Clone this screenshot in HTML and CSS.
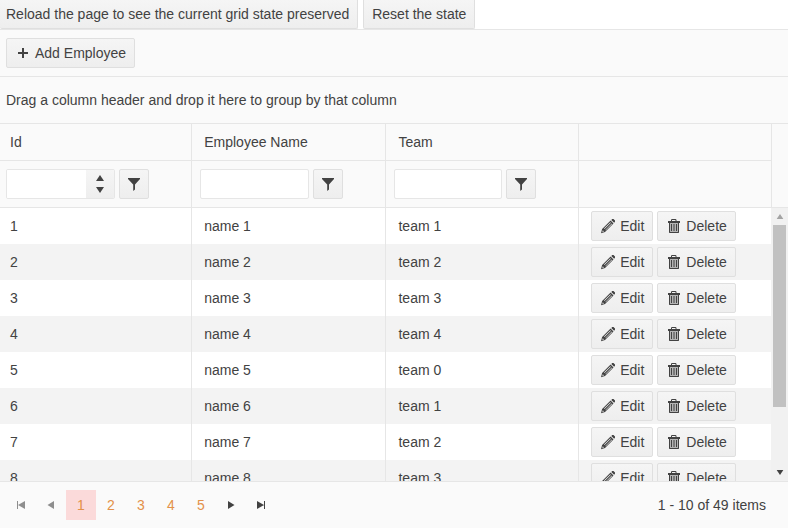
FILE: index.html
```html
<!DOCTYPE html>
<html lang="en">
<head>
<meta charset="utf-8">
<title>Employees</title>
<link rel="stylesheet" href="styles.css">
</head>
<body>
<svg class="sprite" aria-hidden="true">
  <symbol id="plus" viewBox="0 0 16 16"><path d="M7 3h2v4h4v2H9v4H7V9H3V7h4z"/></symbol>
  <symbol id="filter" viewBox="0 0 16 16"><path d="M2 2h12v1L9 8.500v5L7.200 15V8.500L2 3z"/></symbol>
  <symbol id="pencil" viewBox="0 0 16 16"><path fill-rule="evenodd" d="M11.300 1.900 12.200 1h1.300L15 2.500v1.300l-.9.9zM10.600 2.600l2.900 2.900-8.500 8.500L1 15.200l1.100-4.200zM10.400 4.200 4 10.600l.5.5 6.400-6.400zM11.700 5.500 5.300 11.900l.4.4 6.400-6.400zM2.800 12.200l-.5 1.800 1.700-.5z"/></symbol>
  <symbol id="trash" viewBox="0 0 16 16"><path fill-opacity=".35" d="M4 5h8v9H4z"/><path fill-rule="evenodd" d="M5 3V1.800L5.800 1h3.900l.8.800V3H14v2H2V3zM6 3h3.500V2H6zM3 5h1v9h8V5h1v9.500l-.5.5h-9l-.5-.5zM5 6h1v7H5zM7.500 6h1v7h-1zM10 6h1v7h-1z"/></symbol>
  <symbol id="first" viewBox="0 0 16 16"><path d="M4 4h1v8H4zM12 4v8L5 8z"/></symbol>
  <symbol id="prev" viewBox="0 0 16 16"><path d="M11 4v8L4.500 8z"/></symbol>
  <symbol id="next" viewBox="0 0 16 16"><path d="M5 4v8l6.500-4z"/></symbol>
  <symbol id="last" viewBox="0 0 16 16"><path d="M11 4h1v8h-1zM4 4v8l7-4z"/></symbol>
  <symbol id="up" viewBox="0 0 8 6"><path d="M0 6h8L4 0z"/></symbol>
  <symbol id="down" viewBox="0 0 8 6"><path d="M0 0h8L4 6z"/></symbol>
</svg>
<div class="actions">
  <button class="btn btn-reload">Reload the page to see the current grid state preserved</button>
  <button class="btn">Reset the state</button>
</div>
<main class="grid">
  <div class="toolbar"><button class="btn"><svg class="icon"><use href="#plus"/></svg>Add Employee</button></div>
  <div class="grouping">Drag a column header and drop it here to group by that column</div>
  <div class="table-area">
    <div class="table-wrap">
    <table>
      <colgroup><col class="col-id"><col class="col-name"><col class="col-team"><col class="col-commands"></colgroup>
      <thead>
        <tr><th>Id</th><th>Employee Name</th><th>Team</th><th></th></tr>
        <tr class="filters">
          <td><div class="filter">
            <div class="numeric"><input type="text" inputmode="numeric" aria-label="Filter by id"><span class="spinner"><button aria-label="Increase"><svg><use href="#up"/></svg></button><button aria-label="Decrease"><svg><use href="#down"/></svg></button></span></div>
            <button class="btn btn-icon" aria-label="Id filter options"><svg class="icon"><use href="#filter"/></svg></button>
          </div></td>
          <td><div class="filter"><input class="textbox" type="text" aria-label="Filter by employee name"><button class="btn btn-icon" aria-label="Name filter options"><svg class="icon"><use href="#filter"/></svg></button></div></td>
          <td><div class="filter"><input class="textbox" type="text" aria-label="Filter by team"><button class="btn btn-icon" aria-label="Team filter options"><svg class="icon"><use href="#filter"/></svg></button></div></td>
          <td></td>
        </tr>
      </thead>
      <tbody id="rows"></tbody>
    </table>
    </div>
    <div class="side">
      <div class="side-header"></div>
      <div class="scrollbar">
        <span class="arrow arrow-up"><svg><use href="#up"/></svg></span>
        <div class="track"><div class="thumb"></div></div>
        <span class="arrow"><svg><use href="#down"/></svg></span>
      </div>
    </div>
  </div>
  <nav class="pager" aria-label="Pages">
    <button class="page-nav" disabled aria-label="First page"><svg class="icon"><use href="#first"/></svg></button>
    <button class="page-nav" disabled aria-label="Previous page"><svg class="icon"><use href="#prev"/></svg></button>
    <a class="page current" href="#1">1</a><a class="page" href="#2">2</a><a class="page" href="#3">3</a><a class="page" href="#4">4</a><a class="page" href="#5">5</a>
    <button class="page-nav" aria-label="Next page"><svg class="icon"><use href="#next"/></svg></button>
    <button class="page-nav" aria-label="Last page"><svg class="icon"><use href="#last"/></svg></button>
    <span class="summary">1 - 10 of 49 items</span>
  </nav>
</main>
<script src="grid.js"></script>
</body>
</html>
```
FILE: grid.js
```js
const rows = document.getElementById("rows");
for (let id = 1; id <= 8; id++) {
  rows.insertAdjacentHTML("beforeend", `<tr>
    <td>${id}</td><td>name ${id}</td><td>team ${id % 5}</td>
    <td><div class="commands">
      <button class="btn"><svg class="icon"><use href="#pencil"/></svg>Edit</button>
      <button class="btn"><svg class="icon"><use href="#trash"/></svg>Delete</button>
    </div></td>
  </tr>`);
}
```
FILE: styles.css
```css
* { box-sizing: border-box; }

body {
  margin: 0;
  height: 100vh;
  display: flex;
  flex-direction: column;
  overflow: hidden;
  background: #fff;
  color: #424242;
  font: 14px/20px "Liberation Sans", Arial, sans-serif;
}

button, input { font: inherit; color: inherit; }

.sprite { display: none; }

.icon {
  width: 16px;
  height: 16px;
  flex: none;
  fill: currentColor;
}

.btn {
  display: inline-flex;
  align-items: center;
  justify-content: center;
  gap: 4px;
  height: 30px;
  padding: 0 8px;
  border: 1px solid #dfdfdf;
  border-radius: 2px;
  background: linear-gradient(#f5f5f5, #eee);
  white-space: nowrap;
}

.btn-icon { width: 30px; padding: 0; flex: none; }

.actions { display: flex; gap: 5px; }
.actions .btn {
  height: 29px;
  border-top: 0;
  border-top-left-radius: 0;
  border-top-right-radius: 0;
}
.actions .btn-reload { border-left: 0; padding-left: 6px; }

.grid {
  flex: 1;
  min-height: 0;
  display: flex;
  flex-direction: column;
  border-top: 1px solid #e6e6e6;
}

.toolbar {
  display: flex;
  padding: 8px 6px;
  background: #fafafa;
  border-bottom: 1px solid #e6e6e6;
}

.grouping {
  padding: 13px 6px;
  background: #fafafa;
  border-bottom: 1px solid #e6e6e6;
}

.table-area {
  flex: 1;
  min-height: 0;
  display: flex;
  overflow: hidden;
}

.table-wrap {
  flex: 1;
  min-width: 0;
  overflow: hidden;
}

table {
  width: 100%;
  table-layout: fixed;
  border-collapse: separate;
  border-spacing: 0;
}
.col-id { width: 24.8%; }
.col-name { width: 25.2%; }
.col-team { width: 25%; }
.col-commands { width: 25%; }

th, td {
  height: 36px;
  padding: 0 12px;
  border-left: 1px solid #e6e6e6;
  text-align: left;
  font-weight: normal;
}
th:first-child, td:first-child { border-left: 0; padding-left: 10px; }

thead th, thead td { background: #fafafa; border-bottom: 1px solid #e6e6e6; }
thead th { height: 37px; }
.filters td { height: 47px; padding: 8px 42px 8px 8px; }
.filters td:first-child { padding-left: 6px; }

tbody tr:nth-child(even) { background: #f3f3f3; }

.filter { display: flex; gap: 4px; }

.textbox, .numeric {
  flex: 1;
  min-width: 0;
  height: 30px;
  border: 1px solid #e6e6e6;
  border-radius: 2px;
  background: #fff;
}
.textbox { padding: 0 8px; }
.numeric { display: flex; overflow: hidden; }
.numeric input {
  flex: 1;
  min-width: 0;
  border: 0;
  padding: 0 8px;
}

.spinner {
  width: 28px;
  display: flex;
  flex-direction: column;
  background: linear-gradient(#f5f5f5, #eee);
}
.spinner button {
  flex: 1;
  display: flex;
  align-items: flex-end;
  justify-content: center;
  padding: 0 0 3px;
  border: 0;
  background: none;
}
.spinner button + button { align-items: flex-start; padding: 3px 0 0; }
.spinner svg, .arrow svg { width: 8px; height: 6px; fill: currentColor; }

.commands { display: flex; gap: 4px; }

.side {
  width: 17px;
  display: flex;
  flex-direction: column;
}
.side-header {
  height: 84px;
  flex: none;
  background: #fafafa;
  border-left: 1px solid #e6e6e6;
  border-bottom: 1px solid #e6e6e6;
}
.scrollbar {
  flex: 1;
  display: flex;
  flex-direction: column;
  background: #f1f1f1;
}
.arrow {
  height: 17px;
  display: flex;
  align-items: center;
  justify-content: center;
}
.arrow svg { height: 5px; }
.arrow-up { color: #a3a3a3; }
.track { flex: 1; padding: 0 2px; }
.thumb { height: 76%; background: #c1c1c1; }

.pager {
  display: flex;
  align-items: center;
  padding: 8px 22px 8px 6px;
  background: #fafafa;
  border-top: 1px solid #e6e6e6;
}
.page, .page-nav {
  width: 30px;
  height: 30px;
  display: flex;
  align-items: center;
  justify-content: center;
  padding: 0;
  border: 0;
  background: none;
  text-decoration: none;
}
.page { color: #e39149; }
.current { background: #fbdada; }
.page-nav:disabled { color: #8e8e8e; }
.summary { margin-left: auto; }
```
